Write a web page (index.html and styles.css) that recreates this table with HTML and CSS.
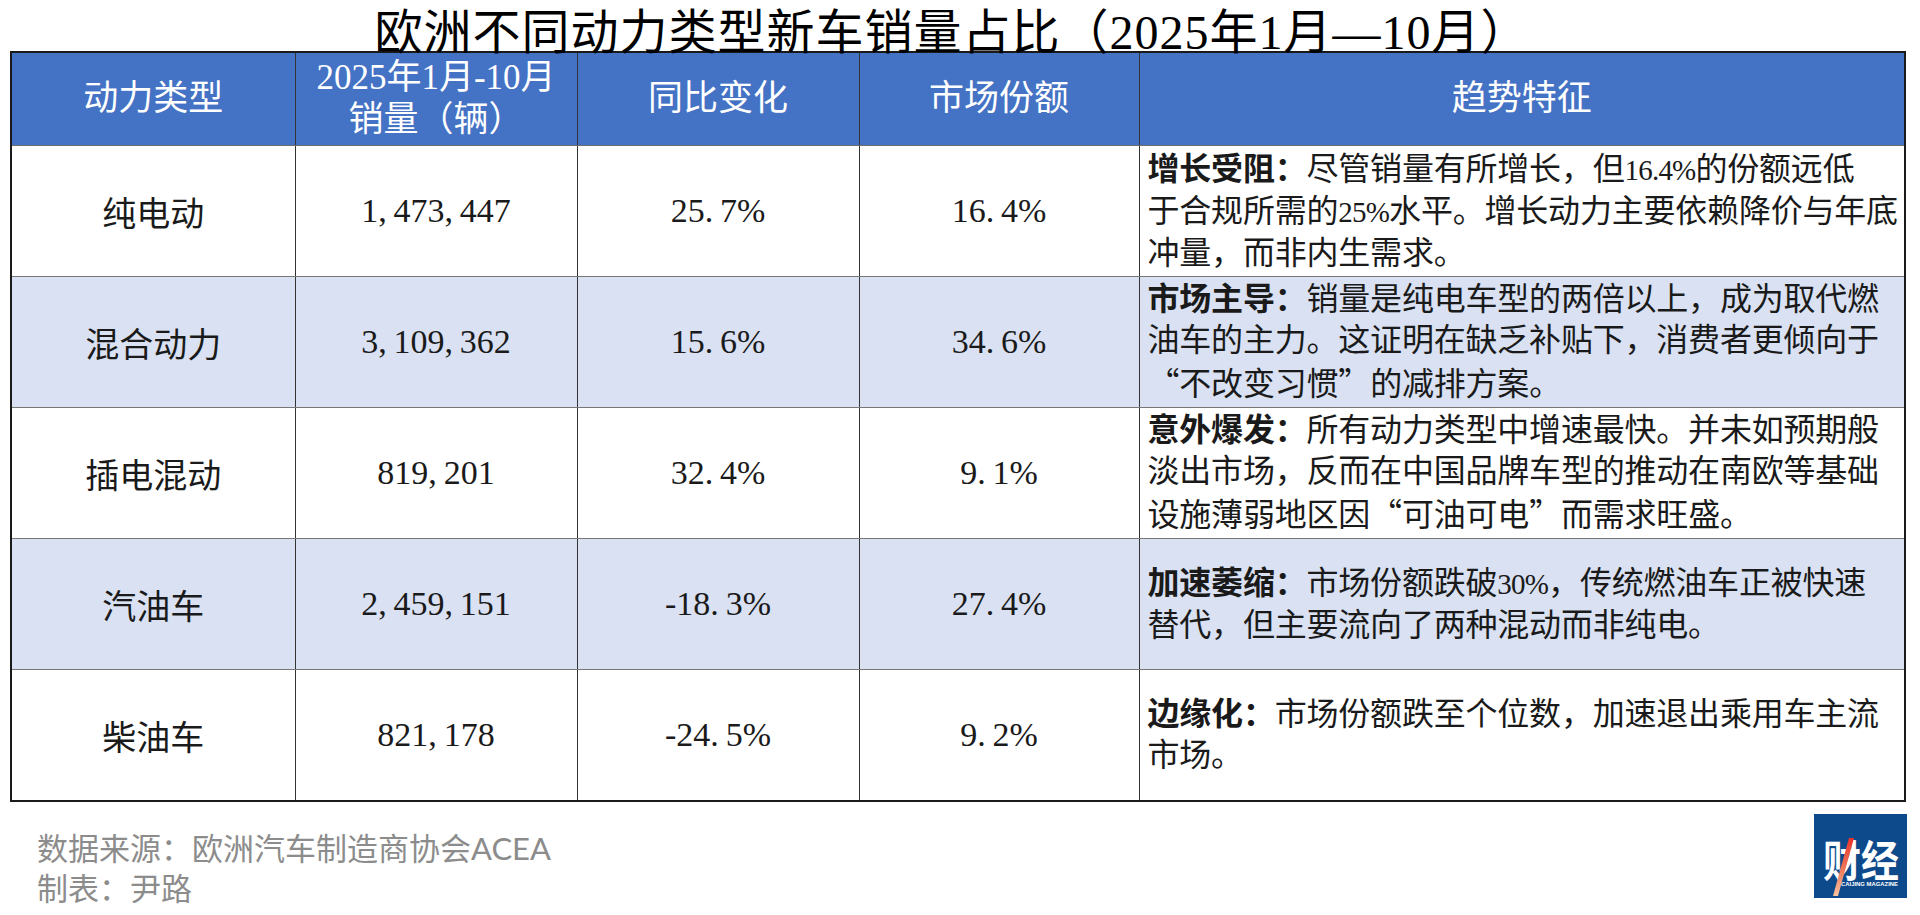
FILE: index.html
```html
<!DOCTYPE html>
<html lang="zh-CN">
<head>
<meta charset="utf-8">
<title>欧洲不同动力类型新车销量占比</title>
<link rel="stylesheet" href="styles.css">
</head>
<body>
<div class="page">
  <h1 class="title">欧洲不同动力类型新车销量占比（2025年1月—10月）</h1>
  <table class="data">
    <colgroup>
      <col class="c1"><col class="c2"><col class="c3"><col class="c4"><col class="c5">
    </colgroup>
    <thead>
      <tr>
        <th>动力类型</th>
        <th>2025年1月-10月<br>销量（辆）</th>
        <th>同比变化</th>
        <th>市场份额</th>
        <th>趋势特征</th>
      </tr>
    </thead>
    <tbody>
      <tr>
        <td class="name">纯电动</td>
        <td class="num">1<span class="p">,</span>473<span class="p">,</span>447</td>
        <td class="num">25<span class="p">.</span>7%</td>
        <td class="num">16<span class="p">.</span>4%</td>
        <td class="trend"><b>增长受阻：</b>尽管销量有所增长，但<span class="d">16.4%</span>的份额远低<br>于合规所需的<span class="d">25%</span>水平。增长动力主要依赖降价与年底<br>冲量，而非内生需求。</td>
      </tr>
      <tr class="alt">
        <td class="name">混合动力</td>
        <td class="num">3<span class="p">,</span>109<span class="p">,</span>362</td>
        <td class="num">15<span class="p">.</span>6%</td>
        <td class="num">34<span class="p">.</span>6%</td>
        <td class="trend"><b>市场主导：</b>销量是纯电车型的两倍以上，成为取代燃<br>油车的主力。这证明在缺乏补贴下，消费者更倾向于<br><span class="cq">“</span>不改变习惯<span class="cq">”</span>的减排方案。</td>
      </tr>
      <tr>
        <td class="name">插电混动</td>
        <td class="num">819<span class="p">,</span>201</td>
        <td class="num">32<span class="p">.</span>4%</td>
        <td class="num">9<span class="p">.</span>1%</td>
        <td class="trend"><b>意外爆发：</b>所有动力类型中增速最快。并未如预期般<br>淡出市场，反而在中国品牌车型的推动在南欧等基础<br>设施薄弱地区因<span class="cq">“</span>可油可电<span class="cq">”</span>而需求旺盛。</td>
      </tr>
      <tr class="alt">
        <td class="name">汽油车</td>
        <td class="num">2<span class="p">,</span>459<span class="p">,</span>151</td>
        <td class="num">-18<span class="p">.</span>3%</td>
        <td class="num">27<span class="p">.</span>4%</td>
        <td class="trend"><b>加速萎缩：</b>市场份额跌破<span class="d">30%</span>，传统燃油车正被快速<br>替代，但主要流向了两种混动而非纯电。</td>
      </tr>
      <tr>
        <td class="name">柴油车</td>
        <td class="num">821<span class="p">,</span>178</td>
        <td class="num">-24<span class="p">.</span>5%</td>
        <td class="num">9<span class="p">.</span>2%</td>
        <td class="trend"><b>边缘化：</b>市场份额跌至个位数，加速退出乘用车主流<br>市场。</td>
      </tr>
    </tbody>
  </table>
  <div class="footer">
    <div class="source">
      <p>数据来源：欧洲汽车制造商协会ACEA</p>
      <p>制表：尹路</p>
    </div>
    <svg class="logo" viewBox="0 0 93 84" width="93" height="84" aria-label="财经">
      <defs>
        <linearGradient id="slash" x1="0" y1="0" x2="0" y2="1">
          <stop offset="0" stop-color="#e8332c"/>
          <stop offset="0.55" stop-color="#f07a5a"/>
          <stop offset="1" stop-color="#f7c3a2"/>
        </linearGradient>
      </defs>
      <rect width="93" height="84" fill="#0d4a8c"/>
      <text transform="scale(1 1.15)"><tspan class="logo-cn" x="9" y="55">财经</tspan><tspan class="logo-en" x="27" y="63" textLength="57" lengthAdjust="spacingAndGlyphs">CAIJING MAGAZINE</tspan></text>
      <polygon points="35,24 40,24 24,82 19,82" fill="url(#slash)"/>
    </svg>
  </div>
</div>
</body>
</html>
```

FILE: styles.css
```css
html, body {
  margin: 0;
  padding: 0;
  background: #ffffff;
}

body {
  font-family: "Liberation Serif", "Noto Sans CJK SC", serif;
  color: #1a1a1a;
}

.page {
  width: 1920px;
  box-sizing: border-box;
  padding: 0 16px 0 10px;
}

.title {
  margin: 0;
  height: 51px;
  box-sizing: border-box;
  padding: 5px 10px 0 0;
  display: flex;
  align-items: center;
  justify-content: center;
  font-size: 48px;
  font-weight: normal;
  letter-spacing: 1px;
  color: #000000;
  white-space: nowrap;
}

.data {
  width: 1894px;
  border-collapse: collapse;
  table-layout: fixed;
  border: 2px solid #1a1a1a;
}

.c1 { width: 284px; }
.c2 { width: 282px; }
.c3 { width: 282px; }
.c4 { width: 280px; }
.c5 { width: 766px; }

.data th {
  background: #4472c4;
  color: #ffffff;
  font-weight: normal;
  font-size: 35px;
  line-height: 42px;
  height: 92px;
  padding: 0;
  text-align: center;
  border: 1px solid #333333;
  border-bottom-color: #6f6f6f;
}

.data td {
  height: 130px;
  padding: 0;
  font-size: 32px;
  text-align: center;
  color: #1a1a1a;
  border: 1px solid #333333;
  border-top-color: #777777;
  border-bottom-color: #777777;
}

.data tr.alt td {
  background: #d9e1f2;
}

.data td.name {
  font-size: 34px;
}

.data td.num {
  font-size: 34px;
}

.data td.num .p {
  margin-right: 0.2em;
}

.data td.trend {
  text-align: left;
  padding-left: 8px;
  line-height: 41px;
  letter-spacing: -0.2px;
  white-space: nowrap;
}

.data td.trend b {
  font-weight: bold;
}

.data td.trend .d {
  font-size: 29px;
  letter-spacing: -0.8px;
}

.cq {
  font-family: "Noto Sans CJK SC", sans-serif;
}

.footer {
  display: flex;
  justify-content: space-between;
  align-items: flex-start;
  margin-top: 12px;
}

.source {
  padding: 14px 0 0 27px;
  font-family: "Lato", "Noto Sans CJK SC", sans-serif;
  font-size: 31px;
  line-height: 40px;
  color: #8c8c8c;
}

.source p {
  margin: 0;
}

.logo {
  display: block;
  margin-right: -3px;
}

.logo-cn {
  font-family: "Noto Sans CJK SC", sans-serif;
  font-weight: 700;
  font-size: 38px;
  fill: #ffffff;
}

.logo-en {
  font-family: "Liberation Sans", sans-serif;
  font-weight: 700;
  font-size: 5.2px;
  fill: #ffffff;
}
```
